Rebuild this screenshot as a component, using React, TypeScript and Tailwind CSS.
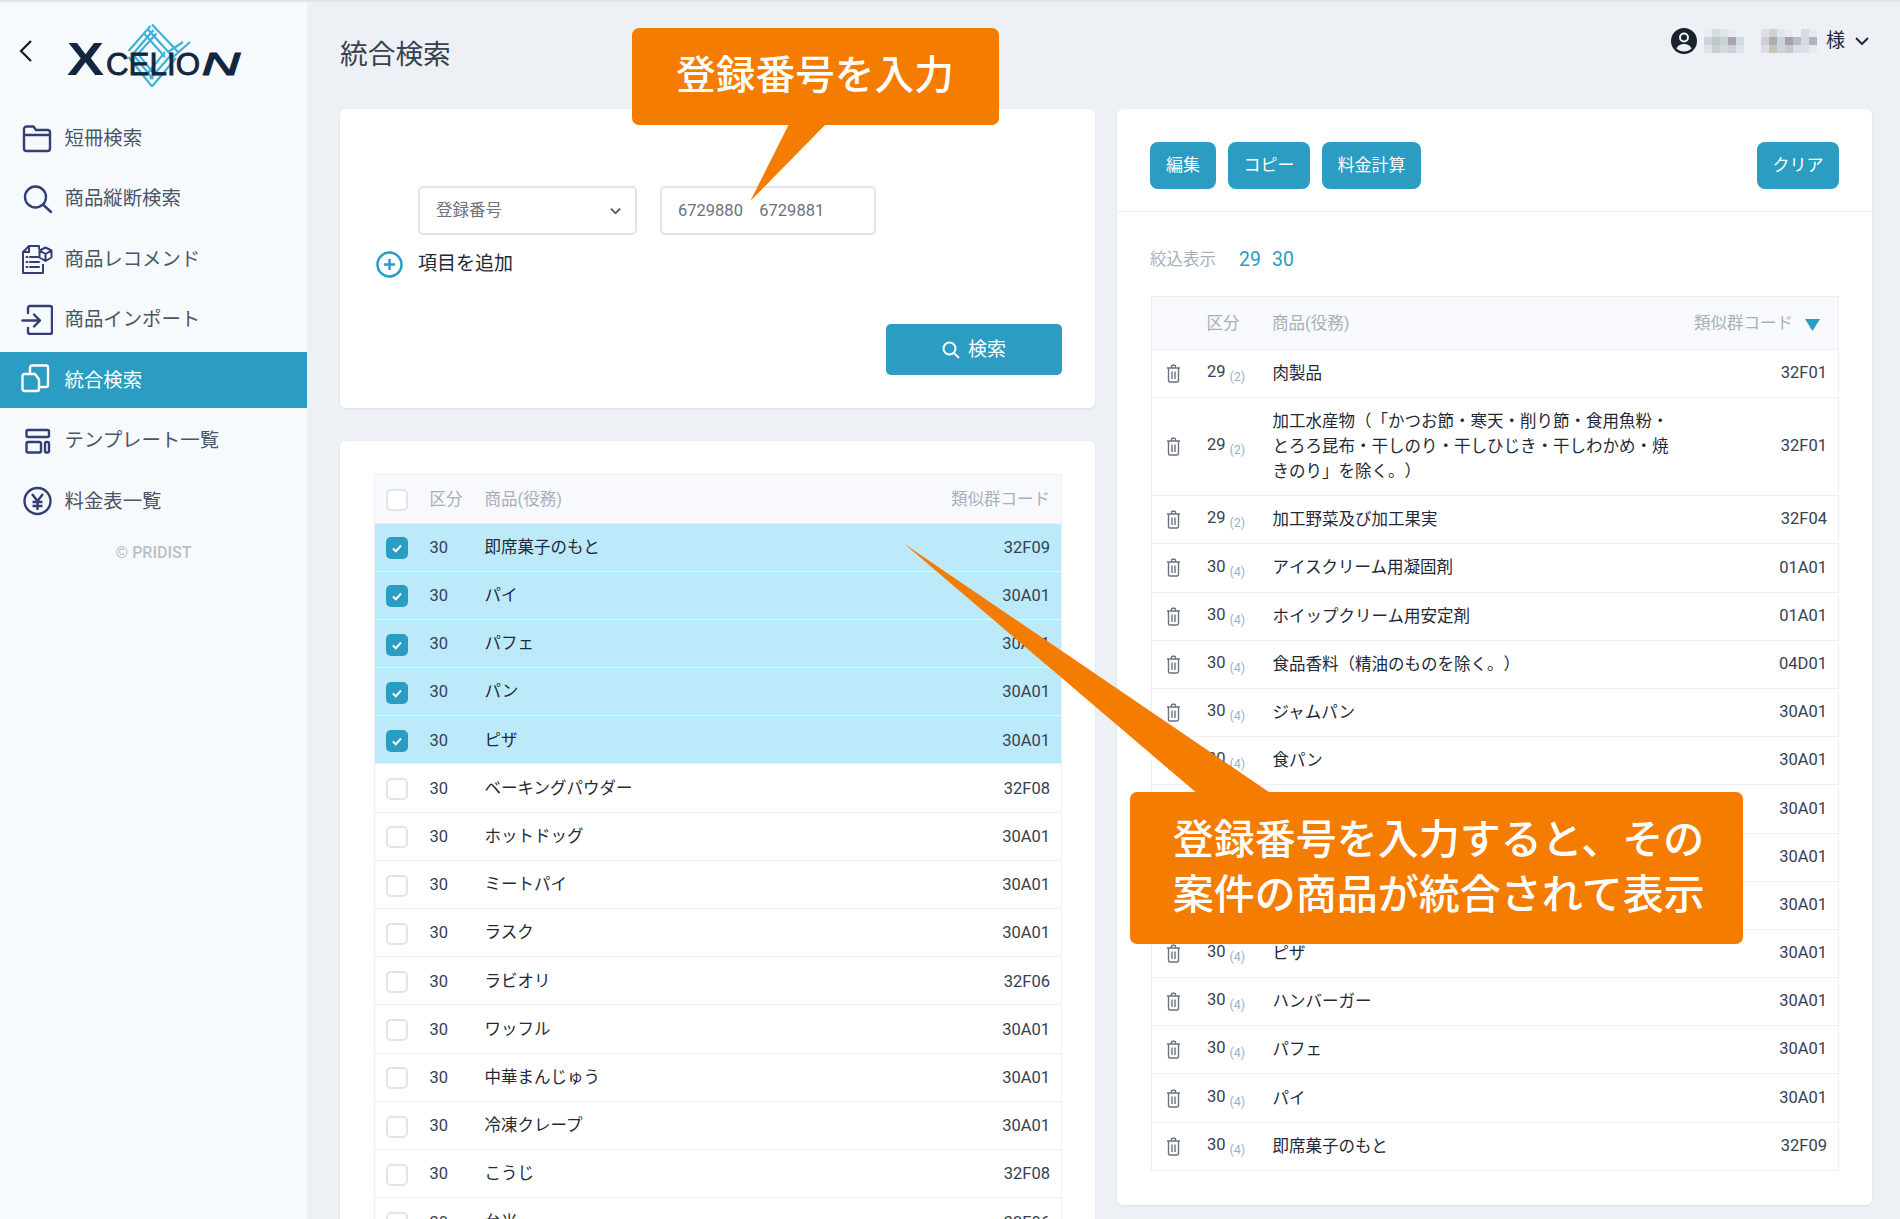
const fontStack = "[font-family:Roboto,'Noto_Sans_CJK_JP',sans-serif] [text-spacing-trim:space-all]";

const navIcon = 'w-8 h-8 shrink-0 fill-none stroke-current stroke-[2.4]';

const FolderIcon = () => (
  <svg viewBox="0 0 32 32" className={navIcon}>
    <path d="M3 13V7a2.5 2.5 0 0 1 2.5-2.5h7L15 8h11.5A2.5 2.5 0 0 1 29 10.5v16a2.5 2.5 0 0 1-2.5 2.5h-21A2.5 2.5 0 0 1 3 26.5zM3 13h26" strokeLinejoin="round" />
  </svg>
);

const SearchIcon = () => (
  <svg viewBox="0 0 32 32" className={navIcon}>
    <circle cx="14.5" cy="15" r="10.5" />
    <path d="M22 22.5l8 7.5" strokeLinecap="round" />
  </svg>
);

const RecommendIcon = () => (
  <svg viewBox="0 0 32 32" className="w-8 h-8 shrink-0 fill-none stroke-current stroke-2">
    <path d="M18 6.5V3H8L2 9v21h20v-9" strokeLinejoin="round" />
    <path d="M8 3v6H2" />
    <path d="M5.5 14h1M5.5 19h1M5.5 24h1M9 14h8M9 19h9M9 24h9" strokeLinecap="round" />
    <path d="M24.5 4.5l6 3v7l-6 3.5-6-3.5v-7zM18.5 7.5l6 3.5 6-3.5M24.5 11v7" strokeLinejoin="round" />
  </svg>
);

const ImportIcon = () => (
  <svg viewBox="0 0 32 32" className={navIcon}>
    <path d="M7 10V5a2 2 0 0 1 2-2h20a2 2 0 0 1 2 2v24a2 2 0 0 1-2 2H9a2 2 0 0 1-2-2v-4" strokeLinecap="round" />
    <path d="M1.5 17.5H19M13 11.5l6 6-6 6" strokeLinecap="round" strokeLinejoin="round" />
  </svg>
);

const MergeIcon = () => (
  <svg viewBox="0 0 32 32" className={navIcon}>
    <path d="M9 10V3.5a2 2 0 0 1 2-2h14a2 2 0 0 1 2 2V21a2 2 0 0 1-2 2h-7v2a2 2 0 0 1-2 2H3.5a2 2 0 0 1-2-2V12a2 2 0 0 1 2-2z" strokeLinejoin="round" />
    <path d="M9 10h5l4 5.5V23" strokeLinejoin="round" />
  </svg>
);

const TemplateIcon = () => (
  <svg viewBox="0 0 32 32" className={navIcon}>
    <rect x="5.5" y="6" width="22.5" height="7" rx="1.5" />
    <rect x="5.5" y="18" width="14.5" height="10.5" rx="1.5" />
    <rect x="24" y="18" width="4" height="10.5" rx="1.5" />
  </svg>
);

const YenIcon = () => (
  <svg viewBox="0 0 32 32" className={navIcon}>
    <circle cx="16.5" cy="16" r="13" />
    <path d="M11 9l5.5 7 5.5-7M16.5 16v9M11.5 17h10M11.5 21h10" />
  </svg>
);

const TrashIcon = () => (
  <svg viewBox="0 0 15 19" className="w-[15px] h-[19px] shrink-0 fill-none stroke-[#6b7280] stroke-[1.4]">
    <path d="M1 4h13M5.5 4V2.3a1 1 0 0 1 1-1h2a1 1 0 0 1 1 1V4M2.5 4v12.5A1.5 1.5 0 0 0 4 18h7a1.5 1.5 0 0 0 1.5-1.5V4M6 7.5V15M9 7.5V15" />
  </svg>
);

const Logo = () => (
  <svg viewBox="60 20 185 70" className="w-[185px] h-[70px] ml-[28px] mt-[18px] shrink-0">
    <g fill="none" stroke="#3fb2d9" strokeWidth="2.2">
      <path d="M150.5 26L128.5 51M153.5 30L132 55M156.5 33.5L137 55" />
      <path d="M152 24.5L179 53M148 29.5L172 56M144.5 34L165 57" />
      <path d="M128.5 57L152 86.5M133.5 55L153 79M138 54L155 75" />
      <path d="M152 86.5L176 58M150 79L171 55M148 73L165 52" />
      <path d="M172 58L190 42M168 52L183 42" />
    </g>
    <g fill="#12263f" stroke="#12263f" fontFamily="'Liberation Sans', sans-serif">
      <text x="67" y="75" fontSize="46" fontWeight="700" strokeWidth="0" textLength="37" lengthAdjust="spacingAndGlyphs">X</text>
      <text x="106" y="75" fontSize="31" strokeWidth="0.8" textLength="94" lengthAdjust="spacingAndGlyphs">CELIO</text>
      <text x="202" y="75" fontSize="31" fontStyle="italic" strokeWidth="1.2" textLength="38" lengthAdjust="spacingAndGlyphs">N</text>
    </g>
  </svg>
);

const navItems = [
  { label: '短冊検索', icon: <FolderIcon /> },
  { label: '商品縦断検索', icon: <SearchIcon /> },
  { label: '商品レコメンド', icon: <RecommendIcon /> },
  { label: '商品インポート', icon: <ImportIcon /> },
  { label: '統合検索', icon: <MergeIcon />, active: true },
  { label: 'テンプレート一覧', icon: <TemplateIcon /> },
  { label: '料金表一覧', icon: <YenIcon /> },
];

const Sidebar = () => (
  <aside className="w-[307px] shrink-0 bg-[#f7fafd]">
    <div className="flex items-start h-[108px] pl-[19px]">
      <svg viewBox="0 0 13 22" className="w-[13px] h-[22px] mt-[38px] shrink-0 fill-none stroke-[#111827] stroke-[2.2]">
        <path d="M12 1L2 11l10 10" />
      </svg>
      <Logo />
    </div>
    <nav className="flex flex-col gap-[5px]">
      {navItems.map((item) => (
        <div
          key={item.label}
          className={`flex items-center gap-[12px] h-[55.5px] pl-[20.5px] text-[19.4px] ${
            item.active ? 'bg-[#2b9cc2] text-white' : 'text-[#4a5568]'
          }`}
        >
          <span className={item.active ? 'text-white' : 'text-[#333e75]'}>{item.icon}</span>
          <span className="pt-[1px]">{item.label}</span>
        </div>
      ))}
    </nav>
    <p className="mt-[12px] text-center text-[16px] font-medium text-[#b7bfca]">© PRIDIST</p>
  </aside>
);

const Checkbox = ({ checked }: { checked?: boolean }) =>
  checked ? (
    <span className="flex items-center justify-center w-[22px] h-[22px] shrink-0 rounded-[5px] bg-[#2b9cc2]">
      <svg viewBox="0 0 12 12" className="w-[12px] h-[12px] fill-none stroke-white stroke-2">
        <path d="M2 6.5l2.8 2.8L10 3.5" />
      </svg>
    </span>
  ) : (
    <span className="block w-[22px] h-[22px] shrink-0 rounded-[5px] border-2 border-[#dfe5ee] bg-white" />
  );

const leftRows = [
  { name: '即席菓子のもと', code: '32F09', checked: true },
  { name: 'パイ', code: '30A01', checked: true },
  { name: 'パフェ', code: '30A01', checked: true },
  { name: 'パン', code: '30A01', checked: true },
  { name: 'ピザ', code: '30A01', checked: true },
  { name: 'ベーキングパウダー', code: '32F08' },
  { name: 'ホットドッグ', code: '30A01' },
  { name: 'ミートパイ', code: '30A01' },
  { name: 'ラスク', code: '30A01' },
  { name: 'ラビオリ', code: '32F06' },
  { name: 'ワッフル', code: '30A01' },
  { name: '中華まんじゅう', code: '30A01' },
  { name: '冷凍クレープ', code: '30A01' },
  { name: 'こうじ', code: '32F08' },
  { name: '台米', code: '32F06' },
];

const rightRows: { cls: string; count: string; name: React.ReactNode; code: string; tall?: boolean }[] = [
  { cls: '29', count: '(2)', name: '肉製品', code: '32F01' },
  {
    cls: '29',
    count: '(2)',
    name: (
      <>
        加工水産物（「かつお節・寒天・削り節・食用魚粉・
        <br />
        とろろ昆布・干しのり・干しひじき・干しわかめ・焼
        <br />
        きのり」を除く。）
      </>
    ),
    code: '32F01',
    tall: true,
  },
  { cls: '29', count: '(2)', name: '加工野菜及び加工果実', code: '32F04' },
  { cls: '30', count: '(4)', name: 'アイスクリーム用凝固剤', code: '01A01' },
  { cls: '30', count: '(4)', name: 'ホイップクリーム用安定剤', code: '01A01' },
  { cls: '30', count: '(4)', name: '食品香料（精油のものを除く。）', code: '04D01' },
  { cls: '30', count: '(4)', name: 'ジャムパン', code: '30A01' },
  { cls: '30', count: '(4)', name: '食パン', code: '30A01' },
  { cls: '30', count: '(4)', name: 'ホットドッグ', code: '30A01' },
  { cls: '30', count: '(4)', name: 'ミートパイ', code: '30A01' },
  { cls: '30', count: '(4)', name: 'パン', code: '30A01' },
  { cls: '30', count: '(4)', name: 'ピザ', code: '30A01' },
  { cls: '30', count: '(4)', name: 'ハンバーガー', code: '30A01' },
  { cls: '30', count: '(4)', name: 'パフェ', code: '30A01' },
  { cls: '30', count: '(4)', name: 'パイ', code: '30A01' },
  { cls: '30', count: '(4)', name: '即席菓子のもと', code: '32F09' },
];

const SearchCard = () => (
  <section className="flex flex-col h-[299px] pt-[77px] bg-white rounded-md shadow-[0_1px_3px_rgba(0,0,0,0.08)]">
    <div className="flex gap-[23px] pl-[78px]">
      <div className="flex items-center justify-between w-[219px] h-[49px] pl-[16px] pr-[14px] pt-[1px] rounded-[5px] border-2 border-[#dfe5ee] text-[16.5px] text-[#6b7280]">
        登録番号
        <svg viewBox="0 0 12 8" className="w-[11px] h-[8px] fill-none stroke-[#4b5563] stroke-2">
          <path d="M1 1.5l5 5 5-5" />
        </svg>
      </div>
      <div className="flex items-center w-[216px] h-[49px] pl-[16px] pt-[1px] rounded-[5px] border-2 border-[#dfe5ee] text-[16.5px] text-[#6b7280] whitespace-pre">
        6729880    6729881
      </div>
    </div>
    <div className="flex items-center gap-[15px] ml-[36px] mt-[15px] text-[19px] text-[#1f2937]">
      <svg viewBox="0 0 27 27" className="w-[27px] h-[27px] fill-none stroke-[#2b9cc2] stroke-[2.5]">
        <circle cx="13.5" cy="13.5" r="12" />
        <path d="M13.5 8v11M8 13.5h11" />
      </svg>
      項目を追加
    </div>
    <button className="flex items-center justify-center gap-[8px] w-[176px] h-[51px] ml-auto mr-[33px] mt-[45.5px] pt-[1px] rounded-[5px] bg-[#2b9cc2] text-[19px] text-white">
      <svg viewBox="0 0 18 18" className="w-[18px] h-[18px] fill-none stroke-white stroke-2">
        <circle cx="7.5" cy="7.5" r="6" />
        <path d="M12 12l5 5" />
      </svg>
      検索
    </button>
  </section>
);

const ProductCard = () => (
  <section className="mt-[33px] pt-[33px] pl-[33.5px] pr-[33px] bg-white rounded-md shadow-[0_1px_3px_rgba(0,0,0,0.08)]">
    <div className="border-x border-t border-[#edf1f6]">
      <div className="flex items-center h-[48.5px] pt-[2.4px] pl-[11px] pr-[11px] bg-[#f7f9fc] border-b border-[#edf1f6] text-[16.5px] text-[#a8b0bb]">
        <Checkbox />
        <span className="w-[55px] ml-[22px]">区分</span>
        <span className="flex-1">商品(役務)</span>
        <span>類似群コード</span>
      </div>
      {leftRows.map((row) => (
        <div
          key={row.name}
          className={`flex items-center h-[48.2px] pt-[2.4px] pl-[11px] pr-[11px] border-b text-[16.5px] ${
            row.checked ? 'bg-[#bdeafa] border-[#e2f5fc]' : 'border-[#edf1f6]'
          }`}
        >
          <Checkbox checked={row.checked} />
          <span className="w-[55px] ml-[22px] text-[#374151]">30</span>
          <span className="flex-1 text-[#1f2937]">{row.name}</span>
          <span className="text-[#374151]">{row.code}</span>
        </div>
      ))}
    </div>
  </section>
);

const ToolButton = ({ label, width }: { label: string; width: string }) => (
  <button className={`h-[47px] ${width} rounded-lg bg-[#2b9cc2] text-[17px] text-white`}>{label}</button>
);

const ResultCard = () => (
  <section className="pb-[34px] bg-white rounded-md shadow-[0_1px_3px_rgba(0,0,0,0.08)]">
    <div className="flex items-center gap-[12px] pt-[33px] pb-[22px] pl-[33px] pr-[33px] border-b border-[#edf1f6]">
      <ToolButton label="編集" width="w-[66px]" />
      <ToolButton label="コピー" width="w-[82px]" />
      <ToolButton label="料金計算" width="w-[99px]" />
      <div className="flex-1" />
      <ToolButton label="クリア" width="w-[82px]" />
    </div>
    <div className="flex items-center h-[24px] mt-[36px] pl-[33px] text-[16.5px] text-[#a9b1bb]">
      <span className="w-[89px]">絞込表示</span>
      <span className="w-[33px] text-[19.4px] text-[#2b9cc2]">29</span>
      <span className="text-[19.4px] text-[#2b9cc2]">30</span>
    </div>
    <div className="ml-[33.5px] mr-[33px] mt-[24px] border-x border-t border-[#edf1f6]">
      <div className="flex items-center h-[53px] pt-[3px] pl-[55px] pr-[18px] bg-[#f7f9fc] border-b border-[#edf1f6] text-[16.5px] text-[#a8b0bb]">
        <span className="w-[65.5px]">区分</span>
        <span className="flex-1">商品(役務)</span>
        <span>類似群コード</span>
        <svg viewBox="0 0 15 12" className="w-[15px] h-[12px] ml-[12px] fill-[#2b9cc2]">
          <path d="M0 0h15L7.5 12z" />
        </svg>
      </div>
      {rightRows.map((row) => (
        <div
          key={row.code + String(typeof row.name === 'string' ? row.name : 'tall')}
          className={`flex items-center pl-[14.5px] pr-[11px] border-b border-[#edf1f6] text-[16.5px] ${
            row.tall ? 'h-[98px]' : 'h-[48.2px]'
          }`}
        >
          <TrashIcon />
          <span className="w-[65.5px] ml-[26px] text-[#374151]">
            {row.cls}
            <span className="ml-[4px] text-[12.5px] text-[#8fb4cc] align-[-4px]">{row.count}</span>
          </span>
          <span className="flex-1 leading-[25px] whitespace-nowrap text-[#1f2937]">{row.name}</span>
          <span className="text-[#374151]">{row.code}</span>
        </div>
      ))}
    </div>
  </section>
);

const mosaicA = [
  'bg-[#e8edf3]', 'bg-[#d6dbe0]', 'bg-[#dde6ec]', 'bg-[#e6ebf2]', 'bg-[#edf1f5]',
  'bg-[#cdd3da]', 'bg-[#c0c5c9]', 'bg-[#c9d3d6]', 'bg-[#a9a3ab]', 'bg-[#cfdae2]',
  'bg-[#dde3e9]', 'bg-[#c9cfd1]', 'bg-[#d3d9dc]', 'bg-[#d0cfdd]', 'bg-[#dde3e8]',
];

const mosaicB = [
  'bg-[#dfe0e6]', 'bg-[#cfd2d3]', 'bg-[#dfe5ec]', 'bg-[#e8ebf2]', 'bg-[#edf1f5]', 'bg-[#d8dce0]', 'bg-[#e6e9ee]',
  'bg-[#d3cfd8]', 'bg-[#aeaeac]', 'bg-[#cdd5dc]', 'bg-[#a99fa9]', 'bg-[#b4bfc9]', 'bg-[#d6dade]', 'bg-[#b3b2bc]',
  'bg-[#dcdde2]', 'bg-[#c9c4ba]', 'bg-[#ccd5dc]', 'bg-[#c4c8d0]', 'bg-[#dbe0e6]', 'bg-[#dadfe8]', 'bg-[#e6e9ef]',
];

const UserMenu = () => (
  <div className="flex items-center mt-[25px] mr-[3px]">
    <svg viewBox="0 0 26 26" className="w-[26px] h-[26px] shrink-0">
      <circle cx="13" cy="13" r="13" fill="#1a202c" />
      <circle cx="13" cy="9.5" r="4" fill="none" stroke="#edf1f5" strokeWidth="2" />
      <path d="M5.5 20.5c1.5-3.5 5-4.5 7.5-4.5s6 1 7.5 4.5c-2 2-4.5 3-7.5 3s-5.5-1-7.5-3z" fill="#edf1f5" />
    </svg>
    <div className="grid grid-cols-[repeat(5,8px)] auto-rows-[8px] ml-[7px]">
      {mosaicA.map((c, i) => (
        <div key={i} className={c} />
      ))}
    </div>
    <div className="grid grid-cols-[repeat(7,8px)] auto-rows-[8px] ml-[17px]">
      {mosaicB.map((c, i) => (
        <div key={i} className={c} />
      ))}
    </div>
    <span className="ml-[9px] text-[19px] text-[#1f2937]">様</span>
    <svg viewBox="0 0 14 8" className="w-[14px] h-[8px] ml-[10px] fill-none stroke-[#1f2937] stroke-2">
      <path d="M1 1l6 6 6-6" />
    </svg>
  </div>
);

export default function App() {
  return (
    <div className={`relative w-[1900px] h-[1219px] overflow-hidden bg-[#edf1f5] border-t-2 border-[#e2e5e8] ${fontStack}`}>
      <div className="flex h-full">
        <Sidebar />
        <main className="flex-1 pl-[33px] pr-[28px]">
          <header className="flex justify-between items-start h-[107px]">
            <h1 className="mt-[33px] text-[27.7px] leading-[40px] text-[#374151]">統合検索</h1>
            <UserMenu />
          </header>
          <div className="flex items-start gap-[22px]">
            <div className="w-[755px] shrink-0">
              <SearchCard />
              <ProductCard />
            </div>
            <div className="w-[755px] shrink-0">
              <ResultCard />
            </div>
          </div>
        </main>
      </div>

      {/* 吹き出し */}
      <svg viewBox="0 0 1900 1219" className="absolute left-0 top-[-2px] w-[1900px] h-[1219px] pointer-events-none">
        <polygon points="789,124 826,124 750.4,201" fill="#f47c00" />
        <polygon points="904.5,544 1195.6,792 1269,792" fill="#f47c00" />
      </svg>
      <div className="absolute left-[631.5px] top-[26px] flex items-center justify-center w-[367px] h-[97px] pb-[2px] rounded-[7px] bg-[#f47c00] text-[39.7px] font-medium text-white">
        登録番号を入力
      </div>
      <div className="absolute left-[1129.5px] top-[790px] flex items-center justify-center w-[613.5px] h-[152px] pl-[5px] rounded-[7px] bg-[#f47c00] text-[41px] leading-[55px] font-medium text-white whitespace-nowrap">
        <p>
          登録番号を入力すると、その
          <br />
          案件の商品が統合されて表示
        </p>
      </div>
    </div>
  );
}
